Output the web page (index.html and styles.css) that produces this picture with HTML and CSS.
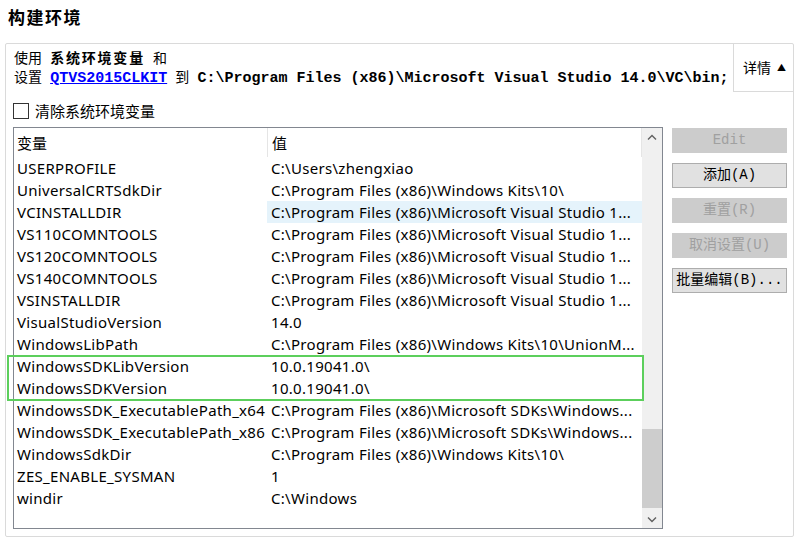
FILE: index.html
```html
<!DOCTYPE html>
<html lang="zh-CN">
<head>
<meta charset="utf-8">
<title>构建环境</title>
<link rel="stylesheet" href="styles.css">
</head>
<body>
<div class="title">构建环境</div>
<div class="panel">
  <div class="top">
    <div class="info">
      <div class="line">使用 <b>系统环境变量</b> 和</div>
      <div class="line">设置 <a class="mono link">QTVS2015CLKIT</a> 到 <span class="mono">C:\Program Files (x86)\Microsoft Visual Studio 14.0\VC\bin;</span></div>
    </div>
    <div class="details">详情<span class="tri">▲</span></div>
  </div>
  <div class="check-row">
    <span class="box"></span>
    <span class="check-label">清除系统环境变量</span>
  </div>
  <div class="main">
    <div class="table">
      <div class="list">
        <div class="head">
          <div class="c1">变量</div>
          <div class="c2">值</div>
        </div>
        <div class="row"><div class="c1">USERPROFILE</div><div class="c2">C:\Users\zhengxiao</div></div>
        <div class="row"><div class="c1">UniversalCRTSdkDir</div><div class="c2">C:\Program Files (x86)\Windows Kits\10\</div></div>
        <div class="row"><div class="c1">VCINSTALLDIR</div><div class="c2 sel">C:\Program Files (x86)\Microsoft Visual Studio 1...</div></div>
        <div class="row"><div class="c1">VS110COMNTOOLS</div><div class="c2">C:\Program Files (x86)\Microsoft Visual Studio 1...</div></div>
        <div class="row"><div class="c1">VS120COMNTOOLS</div><div class="c2">C:\Program Files (x86)\Microsoft Visual Studio 1...</div></div>
        <div class="row"><div class="c1">VS140COMNTOOLS</div><div class="c2">C:\Program Files (x86)\Microsoft Visual Studio 1...</div></div>
        <div class="row"><div class="c1">VSINSTALLDIR</div><div class="c2">C:\Program Files (x86)\Microsoft Visual Studio 1...</div></div>
        <div class="row"><div class="c1">VisualStudioVersion</div><div class="c2">14.0</div></div>
        <div class="row"><div class="c1">WindowsLibPath</div><div class="c2">C:\Program Files (x86)\Windows Kits\10\UnionM...</div></div>
        <div class="row"><div class="c1">WindowsSDKLibVersion</div><div class="c2">10.0.19041.0\</div></div>
        <div class="row"><div class="c1">WindowsSDKVersion</div><div class="c2">10.0.19041.0\</div></div>
        <div class="row"><div class="c1">WindowsSDK_ExecutablePath_x64</div><div class="c2">C:\Program Files (x86)\Microsoft SDKs\Windows...</div></div>
        <div class="row"><div class="c1">WindowsSDK_ExecutablePath_x86</div><div class="c2">C:\Program Files (x86)\Microsoft SDKs\Windows...</div></div>
        <div class="row"><div class="c1">WindowsSdkDir</div><div class="c2">C:\Program Files (x86)\Windows Kits\10\</div></div>
        <div class="row"><div class="c1">ZES_ENABLE_SYSMAN</div><div class="c2">1</div></div>
        <div class="row"><div class="c1">windir</div><div class="c2">C:\Windows</div></div>
      </div>
      <div class="scrollbar">
        <div class="arrow"><svg width="10" height="6" viewBox="0 0 10 6"><path d="M1 5.5 L5 1.5 L9 5.5" fill="none" stroke="#606060" stroke-width="1.4"/></svg></div>
        <div class="track"><div class="thumb"></div></div>
        <div class="arrow"><svg width="10" height="6" viewBox="0 0 10 6"><path d="M1 0.5 L5 4.5 L9 0.5" fill="none" stroke="#606060" stroke-width="1.4"/></svg></div>
      </div>
    </div>
    <div class="buttons">
      <div class="btn disabled">Edit</div>
      <div class="btn">添加(A)</div>
      <div class="btn disabled">重置(R)</div>
      <div class="btn disabled">取消设置(U)</div>
      <div class="btn">批量编辑(B)...</div>
    </div>
  </div>
</div>
<div class="mark"></div>
</body>
</html>
```

FILE: styles.css
```css
html, body {
  margin: 0;
  padding: 0;
  background: #ffffff;
}
body {
  width: 802px;
  height: 545px;
  overflow: hidden;
  font-family: "Noto Sans CJK SC", sans-serif;
  color: #000;
  position: relative;
}
.title {
  height: 35px;
  padding: 5px 0 0 8px;
  box-sizing: border-box;
  font-size: 17px;
  font-weight: bold;
  line-height: 24px;
  letter-spacing: 1.5px;
}
.panel {
  margin: 8px 0 0 5px;
  width: 789px;
  height: 494px;
  box-sizing: border-box;
  border: 1px solid #dadada;
  border-radius: 2px;
}
.top {
  display: flex;
  height: 48px;
}
.info {
  flex: 1;
  overflow: hidden;
  white-space: nowrap;
  padding: 4px 0 0 8px;
  font-size: 14px;
  line-height: 19px;
  word-spacing: 5px;
}
.info b {
  font-weight: bold;
  letter-spacing: 1.8px;
}
.mono {
  font-family: "Liberation Mono", monospace;
  font-size: 15px;
  font-weight: bold;
  word-spacing: 0;
}
.link {
  color: #0000ff;
  text-decoration: underline;
}
.details {
  width: 60px;
  height: 48px;
  box-sizing: border-box;
  border-left: 1px solid #dadada;
  border-bottom: 1px solid #dadada;
  font-size: 14px;
  line-height: 46px;
  padding-left: 9px;
  white-space: nowrap;
}
.tri {
  font-size: 9px;
  vertical-align: 2px;
  margin-left: 6px;
}
.check-row {
  display: flex;
  align-items: center;
  height: 22px;
  margin-top: 8px;
  padding-left: 7px;
}
.box {
  width: 14px;
  height: 14px;
  border: 1px solid #333;
  background: #fff;
}
.check-label {
  margin-left: 6px;
  font-size: 15px;
  line-height: 22px;
}
.main {
  display: flex;
  margin-top: 5px;
  padding-left: 7px;
}
.table {
  display: flex;
  width: 650px;
  height: 402px;
  box-sizing: border-box;
  border: 1px solid #828790;
}
.list {
  flex: 1;
  font-family: "Noto Sans", sans-serif;
  font-size: 15px;
  letter-spacing: 0.3px;
  color: #000;
}
.head {
  display: flex;
  height: 29px;
  line-height: 29px;
  font-family: "Noto Sans CJK SC", sans-serif;
  letter-spacing: 0;
}
.head .c2 {
  border-left: 1px solid #e5e5e5;
  border-right: 1px solid #e5e5e5;
}
.row {
  display: flex;
  height: 22px;
  line-height: 22px;
}
.c1 {
  width: 253px;
  padding-left: 3px;
  box-sizing: border-box;
  white-space: nowrap;
  overflow: hidden;
}
.c2 {
  flex: 1;
  padding-left: 4px;
  white-space: nowrap;
  overflow: hidden;
}
.sel {
  background: #e5f3fb;
}
.scrollbar {
  width: 20px;
  background: #f0f0f0;
  display: flex;
  flex-direction: column;
}
.arrow {
  height: 17px;
  display: flex;
  align-items: center;
  justify-content: center;
}
.track {
  flex: 1;
  display: flex;
  flex-direction: column;
  justify-content: flex-end;
  padding-bottom: 3px;
}
.thumb {
  height: 79px;
  background: #cdcdcd;
}
.buttons {
  margin-left: 9px;
  display: flex;
  flex-direction: column;
  gap: 10px;
  padding-top: 1px;
}
.btn {
  width: 115px;
  height: 25px;
  box-sizing: border-box;
  border: 1px solid #adadad;
  background: #e1e1e1;
  font-family: "Liberation Mono", "Noto Sans CJK SC", monospace;
  font-size: 14px;
  line-height: 23px;
  text-align: center;
  white-space: nowrap;
}
.btn.disabled {
  background: #cccccc;
  border-color: #cccccc;
  color: #a0a0a0;
}
.mark {
  position: absolute;
  left: 7px;
  top: 355px;
  width: 637px;
  height: 46px;
  box-sizing: border-box;
  border: 2px solid #5ccf5c;
}
```
